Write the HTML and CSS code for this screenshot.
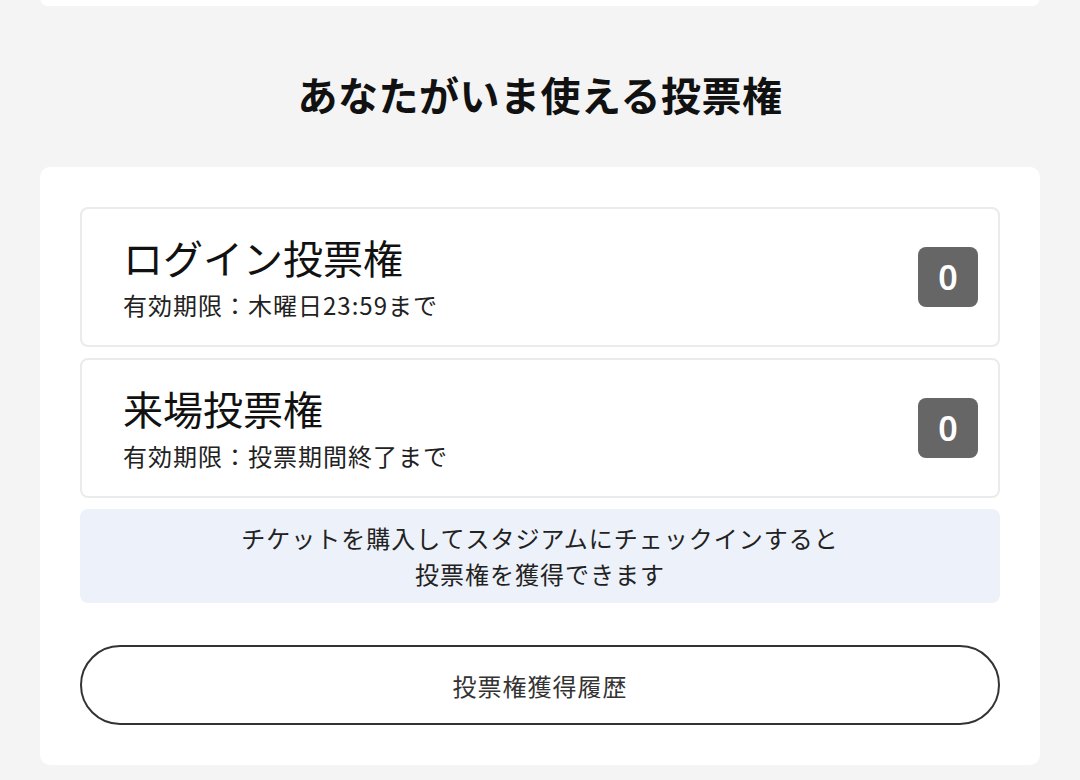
FILE: index.html
```html
<!DOCTYPE html>
<html lang="ja">
<head>
<meta charset="utf-8">
<link rel="stylesheet" href="styles.css">
</head>
<body>
<div class="page">
  <div class="prev-card"></div>
  <h2 class="section-title">あなたがいま使える投票権</h2>
  <div class="card">
    <div class="ticket">
      <div class="ticket-text">
        <div class="ticket-name">ログイン投票権</div>
        <div class="ticket-limit">有効期限：木曜日23:59まで</div>
      </div>
      <div class="badge">0</div>
    </div>
    <div class="ticket">
      <div class="ticket-text">
        <div class="ticket-name">来場投票権</div>
        <div class="ticket-limit">有効期限：投票期間終了まで</div>
      </div>
      <div class="badge">0</div>
    </div>
    <div class="notice">チケットを購入してスタジアムにチェックインすると<br>投票権を獲得できます</div>
    <button class="history-btn">投票権獲得履歴</button>
  </div>
</div>
</body>
</html>
```
FILE: styles.css
```css
html, body {
  margin: 0;
  padding: 0;
  background: #f4f4f4;
  font-family: "Noto Sans CJK JP", "Noto Sans", sans-serif;
  color: #111;
}
.page {
  padding: 0 40px;
  display: flex;
  flex-direction: column;
}
.prev-card {
  height: 16px;
  margin-top: -10px;
  background: #fff;
  border-radius: 10px;
}
.section-title {
  margin: 58px 0 43px;
  text-align: center;
  font-size: 40px;
  line-height: 60px;
  font-weight: 700;
  letter-spacing: 0.5px;
  color: #111;
}
.card {
  background: #fff;
  border-radius: 10px;
  padding: 40px;
  display: flex;
  flex-direction: column;
  gap: 11px;
}
.ticket {
  box-sizing: border-box;
  height: 140px;
  border: 2px solid #ebebeb;
  border-radius: 8px;
  padding: 0 20px 0 41px;
  display: flex;
  align-items: center;
  justify-content: space-between;
}
.ticket-name {
  font-size: 40px;
  line-height: 52px;
  color: #111;
}
.ticket-limit {
  margin-top: 4px;
  font-size: 24px;
  line-height: 36px;
  letter-spacing: 1px;
  color: #222;
}
.badge {
  width: 60px;
  height: 60px;
  border-radius: 8px;
  background: #666;
  color: #fff;
  font-size: 34px;
  font-weight: 600;
  display: flex;
  align-items: center;
  justify-content: center;
  font-family: "Noto Sans", sans-serif;
}
.notice {
  background: #edf1f9;
  border-radius: 8px;
  padding: 11px 0;
  text-align: center;
  font-size: 24px;
  line-height: 36px;
  letter-spacing: 1px;
  color: #222;
}
.history-btn {
  margin-top: 31px;
  height: 80px;
  border: 2px solid #333;
  border-radius: 40px;
  background: #fff;
  font-family: inherit;
  font-size: 24px;
  letter-spacing: 1px;
  color: #333;
}
```
